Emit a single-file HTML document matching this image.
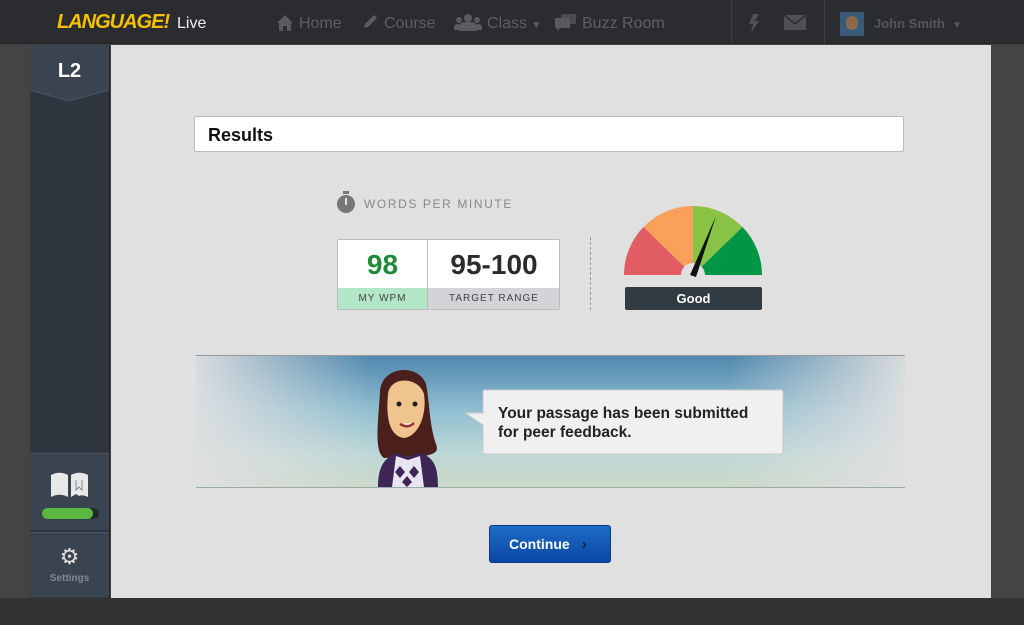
<!DOCTYPE html>
<html><head><style>
*{margin:0;padding:0;box-sizing:border-box}
body{width:1024px;height:625px;overflow:hidden;background:#444;font-family:"Liberation Sans",sans-serif;position:relative}
.abs{position:absolute}
</style></head><body>
<div class="abs" style="left:0;top:0;width:1024px;height:44px;background:#2b2c30;border-bottom:1px solid #222"></div>
<div class="abs" style="left:57px;top:11px;color:#f5c000;font-weight:bold;font-style:italic;font-size:20px;letter-spacing:-1px">LANGUAGE!</div>
<div class="abs" style="left:177px;top:15px;color:#eee;font-size:16px">Live</div>
<svg class="abs" style="left:276px;top:14px" width="18" height="17" viewBox="0 0 18 17"><path d="M9 1L1 9h2v8h4v-5h4v5h4V9h2z" fill="#5a5b5f"/></svg>
<div class="abs" style="left:299px;top:15px;color:#5e5f63;font-size:16px">Home</div>
<svg class="abs" style="left:362px;top:14px" width="16" height="17" viewBox="0 0 16 17"><path d="M12 1l3 3-9 9-4 1 1-4z" fill="#5a5b5f"/></svg>
<div class="abs" style="left:384px;top:15px;color:#5e5f63;font-size:16px">Course</div>
<svg class="abs" style="left:454px;top:13px" width="28" height="18" viewBox="0 0 28 18"><circle cx="14" cy="5" r="4" fill="#5a5b5f"/><path d="M5 18v-5c0-3 4-4 9-4s9 1 9 4v5z" fill="#5a5b5f"/><circle cx="5" cy="7" r="3" fill="#5a5b5f"/><circle cx="23" cy="7" r="3" fill="#5a5b5f"/><path d="M0 17v-3c0-2 2-3 5-3v6zM28 17v-3c0-2-2-3-5-3v6z" fill="#5a5b5f"/></svg>
<div class="abs" style="left:487px;top:15px;color:#5e5f63;font-size:16px">Class <span style="font-size:10px">▼</span></div>
<svg class="abs" style="left:555px;top:14px" width="21" height="17" viewBox="0 0 21 17"><rect x="6" y="0" width="15" height="10" rx="1" fill="#4a4b4f"/><rect x="0" y="4" width="15" height="10" rx="1" fill="#5a5b5f"/><path d="M2 14v3l3-3z" fill="#5a5b5f"/></svg>
<div class="abs" style="left:582px;top:15px;color:#5e5f63;font-size:16px">Buzz Room</div>
<div class="abs" style="left:731px;top:0;width:1px;height:44px;background:#3c3d41"></div>
<div class="abs" style="left:824px;top:0;width:1px;height:44px;background:#3c3d41"></div>
<svg class="abs" style="left:749px;top:14px" width="10" height="19" viewBox="0 0 10 19"><path d="M4 0h6L6 7h4L2 19l2-9H0z" fill="#4f5054"/></svg>
<svg class="abs" style="left:784px;top:15px" width="22" height="15" viewBox="0 0 22 15"><rect width="22" height="15" fill="#4f5054"/><path d="M0 0l11 9 11-9" stroke="#2b2c30" stroke-width="1.5" fill="none"/></svg>
<div class="abs" style="left:840px;top:12px;width:24px;height:24px;background:#3a5a7a"><div style="margin:4px auto;width:12px;height:14px;border-radius:6px;background:#8a6a4a"></div></div>
<div class="abs" style="left:874px;top:16px;color:#55565a;font-size:13px;font-weight:bold">John Smith &nbsp;<span style="font-size:10px">▼</span></div>

<div class="abs" style="left:30px;top:45px;width:80px;height:553px;background:#2f3640;border-right:1px solid #222"></div>
<svg class="abs" style="left:30px;top:45px" width="79" height="58"><path d="M0 0h79v45l-39 11-40-11z" fill="#3a4350"/><path d="M0 45l39 11 40-11" stroke="#4c5563" fill="none"/></svg>
<div class="abs" style="left:30px;top:60px;width:79px;text-align:center;color:#fff;font-weight:bold;font-size:20px">L2</div>
<div class="abs" style="left:30px;top:453px;width:79px;height:77px;background:#3a4350;border-top:1px solid #4a5260"></div>
<svg class="abs" style="left:50px;top:472px" width="40" height="26"><path d="M1 3c5-3 12-3 17 0v22c-5-3-12-3-17 0z" fill="#e8e8e8"/><path d="M21 3c5-3 12-3 17 0v22c-4-2-7-2-9-1l-3-2-5 3z" fill="#e8e8e8"/><path d="M26 8v10l3-3 3 3V8" stroke="#888" fill="none"/></svg>
<div class="abs" style="left:42px;top:508px;width:57px;height:11px;border-radius:6px;background:#22282e"><div style="width:51px;height:11px;border-radius:6px;background:#5ab840"></div></div>
<div class="abs" style="left:30px;top:532px;width:79px;height:65px;background:#3a4350;border-top:1px solid #4a5260"></div>
<div class="abs" style="left:30px;top:545px;width:79px;text-align:center;color:#ddd;font-size:22px;line-height:24px">⚙</div>
<div class="abs" style="left:30px;top:573px;width:79px;text-align:center;color:#808895;font-size:10px;font-weight:bold">Settings</div>

<div class="abs" style="left:111px;top:45px;width:880px;height:553px;background:#e0e0e0"></div>
<div class="abs" style="left:0;top:598px;width:1024px;height:27px;background:#323234"></div>

<div class="abs" style="left:194px;top:116px;width:710px;height:36px;background:#fff;border:1px solid #bbb;border-radius:2px;padding:8px 13px;font-weight:bold;font-size:18px;color:#111">Results</div>

<svg class="abs" style="left:335px;top:190px" width="22" height="24"><rect x="8" y="1" width="6" height="3" fill="#777"/><circle cx="11" cy="14" r="9" fill="#777"/><rect x="10" y="8" width="2" height="7" fill="#e0e0e0"/></svg>
<div class="abs" style="left:364px;top:197px;color:#888;font-size:12px;letter-spacing:1.6px">WORDS PER MINUTE</div>

<div class="abs" style="left:337px;top:239px;width:223px;height:71px;border:1px solid #bbb;border-radius:2px;background:#fff;overflow:hidden">
<div class="abs" style="left:0;top:0;width:90px;height:48px;border-right:1px solid #bbb;text-align:center;color:#1e8a3a;font-weight:bold;font-size:28px;line-height:50px">98</div>
<div class="abs" style="left:90px;top:0;width:132px;height:48px;text-align:center;color:#2b2b2b;font-weight:bold;font-size:28px;line-height:50px">95-100</div>
<div class="abs" style="left:0;top:48px;width:90px;height:22px;background:#b3e6c7;border-right:1px solid #bbb;text-align:center;font-size:10px;letter-spacing:1px;color:#444;line-height:22px">MY WPM</div>
<div class="abs" style="left:90px;top:48px;width:132px;height:22px;background:#d3d3d8;text-align:center;font-size:10px;letter-spacing:1px;color:#444;line-height:22px">TARGET RANGE</div>
</div>
<div class="abs" style="left:590px;top:237px;height:73px;border-left:1px dashed #999"></div>

<svg class="abs" style="left:624px;top:205px" width="140" height="72" viewBox="0 0 140 72">
<g transform="translate(69,70)">
<path d="M0 0L-69 0A69 69 0 0 1 -49.5 -48z" fill="#e25c63"/>
<path d="M0 0L-49.5 -48A69 69 0 0 1 0 -69z" fill="#fba05b"/>
<path d="M0 0L0 -69A69 69 0 0 1 49.5 -48z" fill="#88c345"/>
<path d="M0 0L49.5 -48A69 69 0 0 1 69 0z" fill="#009646"/>
<circle r="12" fill="#e0e0e0"/>
<path d="M-3 0L23 -59L3 2z" fill="#111"/>
</g></svg>
<div class="abs" style="left:625px;top:287px;width:137px;height:23px;background:#323a42;border-radius:2px;color:#fff;font-weight:bold;font-size:13px;text-align:center;line-height:23px">Good</div>

<div class="abs" style="left:196px;top:355px;width:709px;height:133px;border-top:1px solid #999;border-bottom:1px solid #9aa;background:linear-gradient(#4f87ad 0%,#8ebdd0 40%,#bed8d6 75%,#cbd9c9 100%)"></div>
<div class="abs" style="left:196px;top:356px;width:709px;height:131px;background:linear-gradient(90deg,rgba(224,224,224,.95),rgba(224,224,224,0) 25%,rgba(224,224,224,0) 75%,rgba(224,224,224,.95))"></div>
<svg class="abs" style="left:370px;top:366px" width="82" height="121" viewBox="0 0 82 121">
<path d="M10 25C12 0 48-3 56 18c4 20 3 40 10 60 4 10-6 10-10 12L14 92C4 85 8 60 10 25z" fill="#4a1f1c"/>
<path d="M18 28c2-18 30-18 36 0 3 20-5 42-20 44-16-2-18-24-16-44z" fill="#f0c48e"/>
<circle cx="29" cy="38" r="2.5" fill="#222"/><circle cx="45" cy="38" r="2.5" fill="#222"/>
<path d="M30 58c5 3 10 3 14-1" stroke="#933" stroke-width="2.5" fill="#fff"/>
<path d="M8 121c0-20 6-30 20-34l10 4 12-4c14 4 18 14 18 34z" fill="#3d2556"/>
<path d="M26 90l12 4 12-4 4 31H22z" fill="#e8e4f0"/>
<path d="M30 100l5 6-5 6-5-6zM44 100l5 6-5 6-5-6zM37 110l5 6-5 5-5-5z" fill="#3d2556"/>
</svg>
<svg class="abs" style="left:462px;top:389px" width="323" height="67">
<path d="M22 1h297a2 2 0 0 1 2 2v60a2 2 0 0 1-2 2H23a2 2 0 0 1-2-2V36L3 24l18 0V3a2 2 0 0 1 1-2z" fill="#f0f0f0" stroke="#c8c8c8"/>
</svg>
<div class="abs" style="left:498px;top:404px;font-size:15.5px;font-weight:bold;color:#222;line-height:19px">Your passage has been submitted<br>for peer feedback.</div>

<div class="abs" style="left:489px;top:525px;width:122px;height:38px;border-radius:3px;background:linear-gradient(#1d6cc4,#0a47a4);border:1px solid #0a3c8a;color:#fff;font-weight:bold;font-size:14px;line-height:36px;padding-left:19px">Continue <span style="margin-left:8px;color:#0a2a5a;font-size:16px">›</span></div>
</body></html>
